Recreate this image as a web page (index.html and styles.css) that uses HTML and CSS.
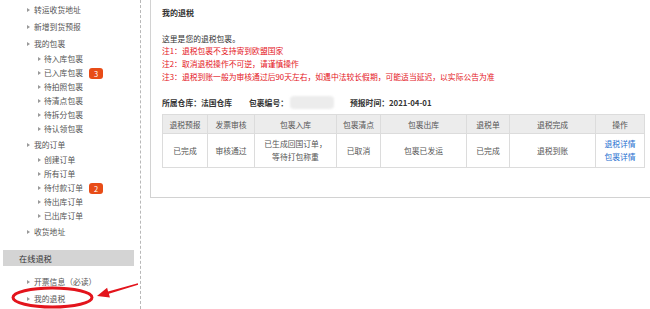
FILE: index.html
```html
<!DOCTYPE html>
<html lang="zh-CN">
<head>
  <meta charset="UTF-8">
  <title>我的退税</title>
  <link rel="stylesheet" href="styles.css">
</head>
<body>

<div class="page">
  <div class="sidebar">
    <ul class="menu">
      <li class="item">转运收货地址</li>
      <li class="item">新增到货预报</li>
      <li class="item">我的包裹</li>
      <li>
        <ul class="sub">
          <li class="sub-item">待入库包裹</li>
          <li class="sub-item">已入库包裹<span class="badge">3</span></li>
          <li class="sub-item">待拍照包裹</li>
          <li class="sub-item">待清点包裹</li>
          <li class="sub-item">待拆分包裹</li>
          <li class="sub-item">待认领包裹</li>
        </ul>
      </li>
      <li class="item">我的订单</li>
      <li>
        <ul class="sub">
          <li class="sub-item">创建订单</li>
          <li class="sub-item">所有订单</li>
          <li class="sub-item">待付款订单<span class="badge">2</span></li>
          <li class="sub-item">待出库订单</li>
          <li class="sub-item">已出库订单</li>
        </ul>
      </li>
      <li class="item">收货地址</li>
    </ul>

    <div class="section-title">在线退税</div>
    <ul class="menu menu-tax">
      <li class="item">开票信息（必读）</li>
      <li class="item">我的退税</li>
    </ul>
  </div>

  <div class="main">
    <div class="box">
      <h2 class="title">我的退税</h2>

      <div class="intro">这里是您的退税包裹。</div>
      <div class="note">注1：退税包裹不支持寄到欧盟国家</div>
      <div class="note">注2：取消退税操作不可逆，请谨慎操作</div>
      <div class="note">注3：退税到账一般为审核通过后90天左右，如遇中法较长假期，可能适当延迟，以实际公告为准</div>

      <div class="info">
        <span class="info-warehouse">所属仓库：法国仓库</span>
        <span class="info-no">包裹编号：<span class="blur"></span></span>
        <span class="info-date">预报时间：2021-04-01</span>
      </div>

      <table class="steps">
        <tr>
          <th class="c1">退税预报</th>
          <th class="c2">发票审核</th>
          <th class="c3">包裹入库</th>
          <th class="c4">包裹清点</th>
          <th class="c5">包裹出库</th>
          <th class="c6">退税单</th>
          <th class="c7">退税完成</th>
          <th class="c8">操作</th>
        </tr>
        <tr>
          <td>已完成</td>
          <td>审核通过</td>
          <td>已生成回国订单，<br>等待打包称重</td>
          <td>已取消</td>
          <td>包裹已发运</td>
          <td>已完成</td>
          <td>退税到账</td>
          <td><a href="#">退税详情</a><br><a href="#">包裹详情</a></td>
        </tr>
      </table>
    </div>
  </div>
</div>

<!-- annotation drawn over the screenshot -->
<svg class="marks" width="650" height="309" viewBox="0 0 650 309">
  <ellipse cx="52.5" cy="297.5" rx="39.5" ry="9.5" fill="none" stroke="#e3141c" stroke-width="3"/>
  <polygon points="97,296 107.1,287.8 108.1,291.4 137.9,283.3 138.1,284.7 108.9,293.8 109.9,297.6" fill="#e3141c"/>
</svg>

</body>
</html>
```

FILE: styles.css
```css
body {
  margin: 0;
  font-family: "Noto Sans CJK SC", "Liberation Sans", sans-serif;
  font-size: 7.8px;
  color: #555;
  background: #fff;
}

.page {
  display: flex;
  height: 309px;
  overflow: hidden;
}

.sidebar {
  width: 141px;
  flex-shrink: 0;
  border-right: 1px dashed #b8b8b8;
  padding-top: 1px;
  box-sizing: border-box;
}

.menu {
  list-style: none;
  margin: 0;
  padding: 0;
}

.item {
  line-height: 17px;
  padding-left: 34px;
  position: relative;
}

.sub {
  list-style: none;
  margin: 0;
  padding: 0;
}

.sub-item {
  line-height: 14px;
  padding-left: 44px;
  position: relative;
}

.item::before,
.sub-item::before {
  content: "";
  position: absolute;
  top: 50%;
  margin-top: -2px;
  border-left: 3px solid #999;
  border-top: 2px solid transparent;
  border-bottom: 2px solid transparent;
}

.item::before {
  left: 27px;
}

.sub-item::before {
  left: 38px;
}

.badge {
  display: inline-block;
  margin-left: 6px;
  width: 14px;
  height: 11px;
  line-height: 11px;
  border-radius: 3px;
  background: #e84c17;
  color: #fff;
  text-align: center;
  font-size: 7.5px;
  vertical-align: -1px;
}

.section-title {
  margin: 10px 6px 0 3px;
  height: 16px;
  line-height: 16px;
  padding-left: 16px;
  background: #d4d4d4;
  color: #333;
  font-size: 8.2px;
}

.menu-tax {
  margin-top: 7px;
}

.main {
  flex: 1;
  padding-left: 9px;
}

.box {
  border-left: 1px solid #d2d2d2;
  border-bottom: 1px solid #d2d2d2;
  padding: 6px 0 29px 11px;
}

.title {
  margin: 0 0 13px;
  font-size: 8px;
  line-height: 14px;
  color: #333;
  font-weight: bold;
}

.intro {
  line-height: 12px;
  color: #333;
}

.note {
  line-height: 12.8px;
  color: #e4141c;
}

.info {
  display: flex;
  align-items: center;
  margin-top: 12px;
  height: 14px;
  color: #333;
  font-weight: bold;
}

.info-warehouse {
  width: 87px;
}

.info-no {
  width: 101px;
  display: flex;
  align-items: center;
}

.blur {
  display: inline-block;
  width: 44px;
  height: 13px;
  margin-left: 2px;
  background: #ececec;
  border-radius: 4px;
  filter: blur(1px);
}

.steps {
  margin-top: 5px;
  border-collapse: collapse;
  width: 475px;
  table-layout: fixed;
  text-align: center;
}

.steps th,
.steps td {
  border: 1px solid #dcdcdc;
  padding: 0;
  font-weight: normal;
  color: #555;
}

.steps th {
  background: #ececec;
  height: 18px;
}

.steps td {
  height: 33px;
  line-height: 12.5px;
}

.c1 { width: 44px; }
.c2 { width: 46px; }
.c3 { width: 81px; }
.c4 { width: 43px; }
.c5 { width: 85px; }
.c6 { width: 42px; }
.c7 { width: 85px; }
.c8 { width: 48px; }

.steps a {
  color: #1f6fd0;
  text-decoration: none;
}

.marks {
  position: absolute;
  left: 0;
  top: 0;
  pointer-events: none;
}
```
